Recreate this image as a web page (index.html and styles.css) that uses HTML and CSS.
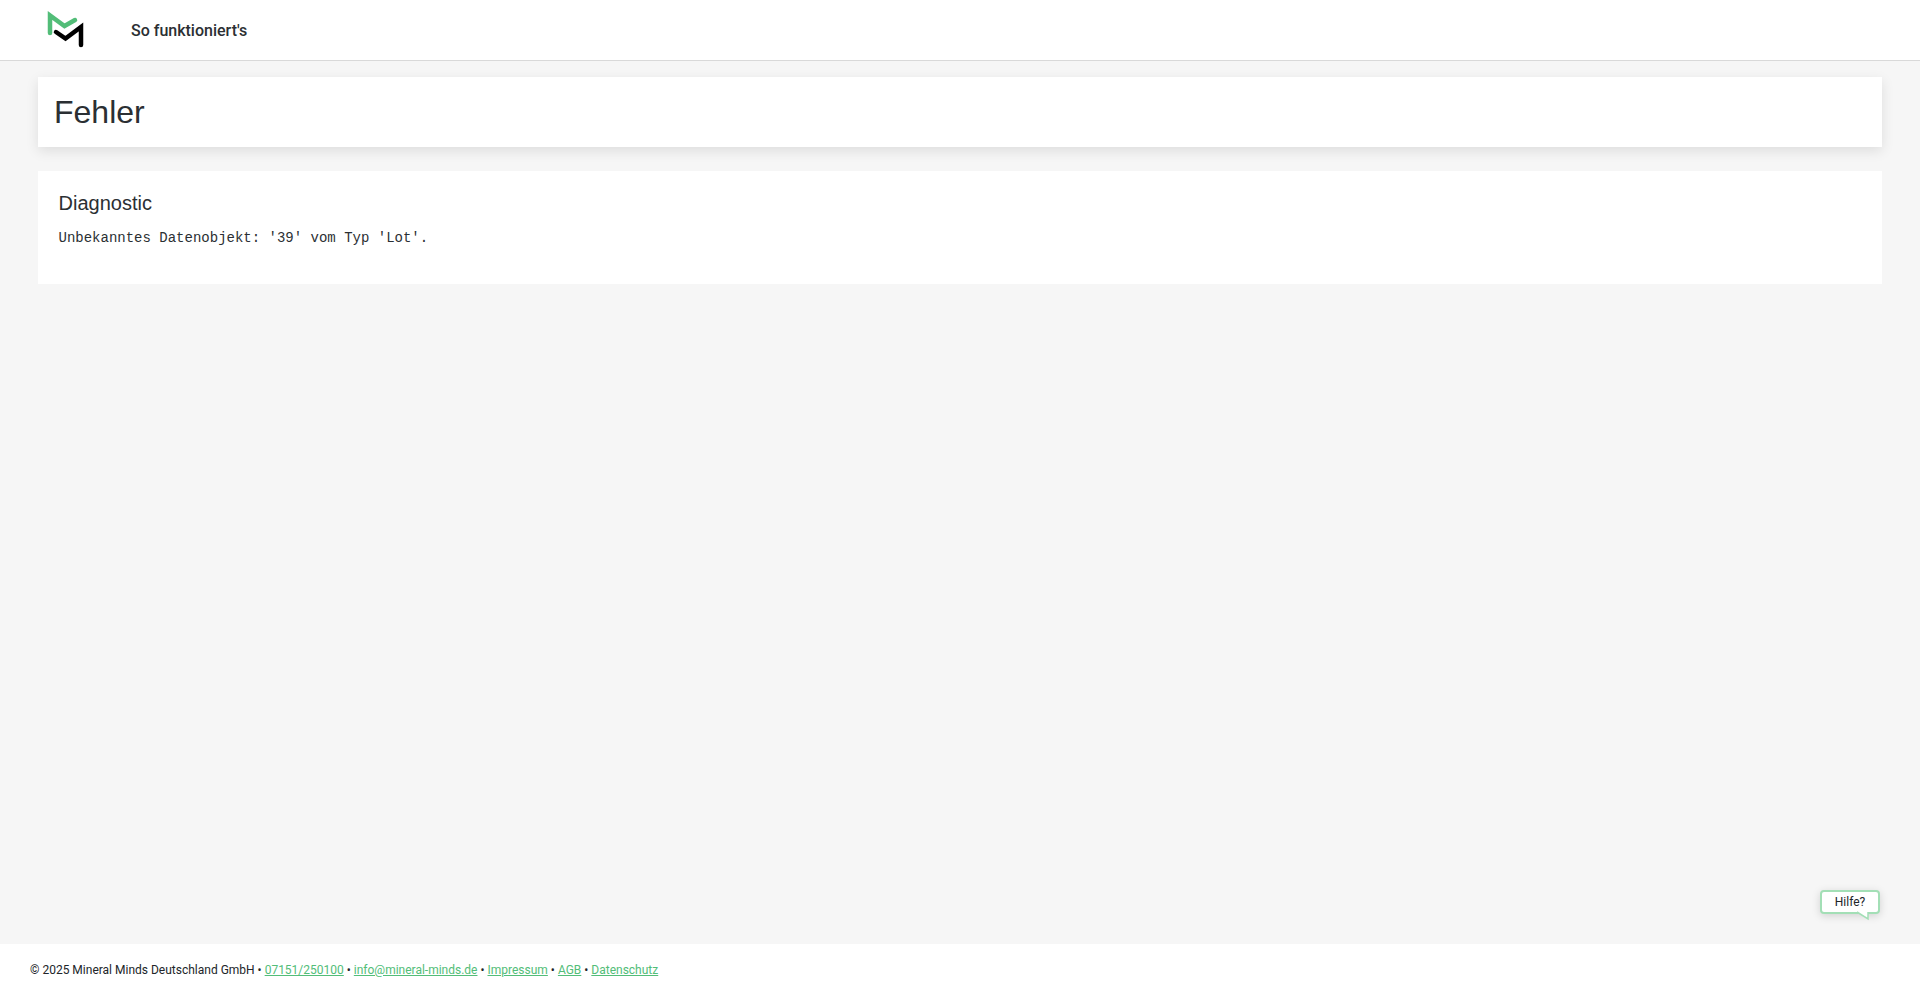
FILE: index.html
```html
<!DOCTYPE html>
<html lang="de">
<head>
<meta charset="utf-8">
<title>Fehler</title>
<link rel="stylesheet" href="styles.css">
</head>
<body>
<header class="topbar">
  <a class="logo" href="#" aria-label="Mineral Minds">
    <svg width="38" height="38" viewBox="0 0 38 38">
      <path class="logo-green" d="M4 22V4.500L18.500 15L29 9"/>
      <path class="logo-black" d="M10 21L19.500 27.500L35 16V34"/>
    </svg>
  </a>
  <a class="nav-link" href="#">So funktioniert's</a>
</header>
<main class="content">
  <section class="title-card"><h1>Fehler</h1></section>
  <section class="diag-card">
    <h2>Diagnostic</h2>
    <pre>Unbekanntes Datenobjekt: '39' vom Typ 'Lot'.</pre>
  </section>
</main>
<div class="help-bubble">Hilfe?
  <svg class="help-tail" width="12" height="8" viewBox="0 0 12 8"><path d="M0 0L11 7V0"/></svg>
</div>
<footer class="footer">
  © 2025 Mineral Minds Deutschland GmbH • <a href="#">07151/250100</a> • <a href="#">info@mineral-minds.de</a> • <a href="#">Impressum</a> • <a href="#">AGB</a> • <a href="#">Datenschutz</a>
</footer>
</body>
</html>
```
FILE: styles.css
```css
* { box-sizing: border-box; }
html, body { height: 100%; }
body {
  margin: 0;
  display: flex;
  flex-direction: column;
  min-height: 994px;
  background: #f6f6f6;
  color: #212529;
  font-family: Roboto, "Liberation Sans", sans-serif;
}
.topbar {
  height: 61px;
  flex: none;
  display: flex;
  align-items: center;
  background: #fff;
  border-bottom: 1px solid #d9d9d9;
  padding-left: 46px;
}
.logo { display: block; width: 38px; height: 38px; margin-right: 47px; }
.logo svg { display: block; }
.logo-green, .logo-black { fill: none; stroke-width: 4.500; stroke-linecap: round; stroke-linejoin: miter; }
.logo-green { stroke: #52bd78; }
.logo-black { stroke: #000; }
.nav-link { color: #2b2f33; font-size: 16px; font-weight: 500; text-decoration: none; }
.content {
  flex: 1;
  display: flex;
  flex-direction: column;
  gap: 24px;
  padding: 16px 38px 0;
}
.title-card {
  height: 70px;
  background: #fff;
  padding: 0 16px;
  display: flex;
  align-items: center;
  box-shadow: 0 4px 12px rgba(0, 0, 0, .1);
}
h1 { margin: 0; color: #2b2f33; font: 400 32px/1.2 "Liberation Sans", Arial, sans-serif; }
.diag-card { height: 113px; background: #fff; padding: 20px 20.500px; }
h2 { margin: 0; color: #2b2f33; font: 400 20px/24px "Liberation Sans", Arial, sans-serif; }
pre { margin: 15px 0 0; color: #2b2f33; font: 400 14px/17px "Liberation Mono", "Courier New", monospace; }
.help-bubble {
  position: absolute;
  left: 1820px;
  top: 890px;
  width: 60px;
  height: 24px;
  background: #fff;
  border: 2px solid #a3dfb6;
  border-radius: 4px;
  font-size: 12px;
  line-height: 20px;
  text-align: center;
  color: #212529;
  box-shadow: 0 2px 8px rgba(0, 0, 0, .15);
}
.help-tail { position: absolute; left: 35px; top: 20px; overflow: visible; }
.help-tail path { fill: #fff; stroke: #a3dfb6; stroke-width: 1.500; }
.footer {
  flex: none;
  height: 50px;
  background: #fff;
  padding: 1px 0 0 30px;
  font-size: 12px;
  line-height: 50px;
  color: #212529;
}
.footer a { color: #52bd78; text-decoration: underline; }
```
